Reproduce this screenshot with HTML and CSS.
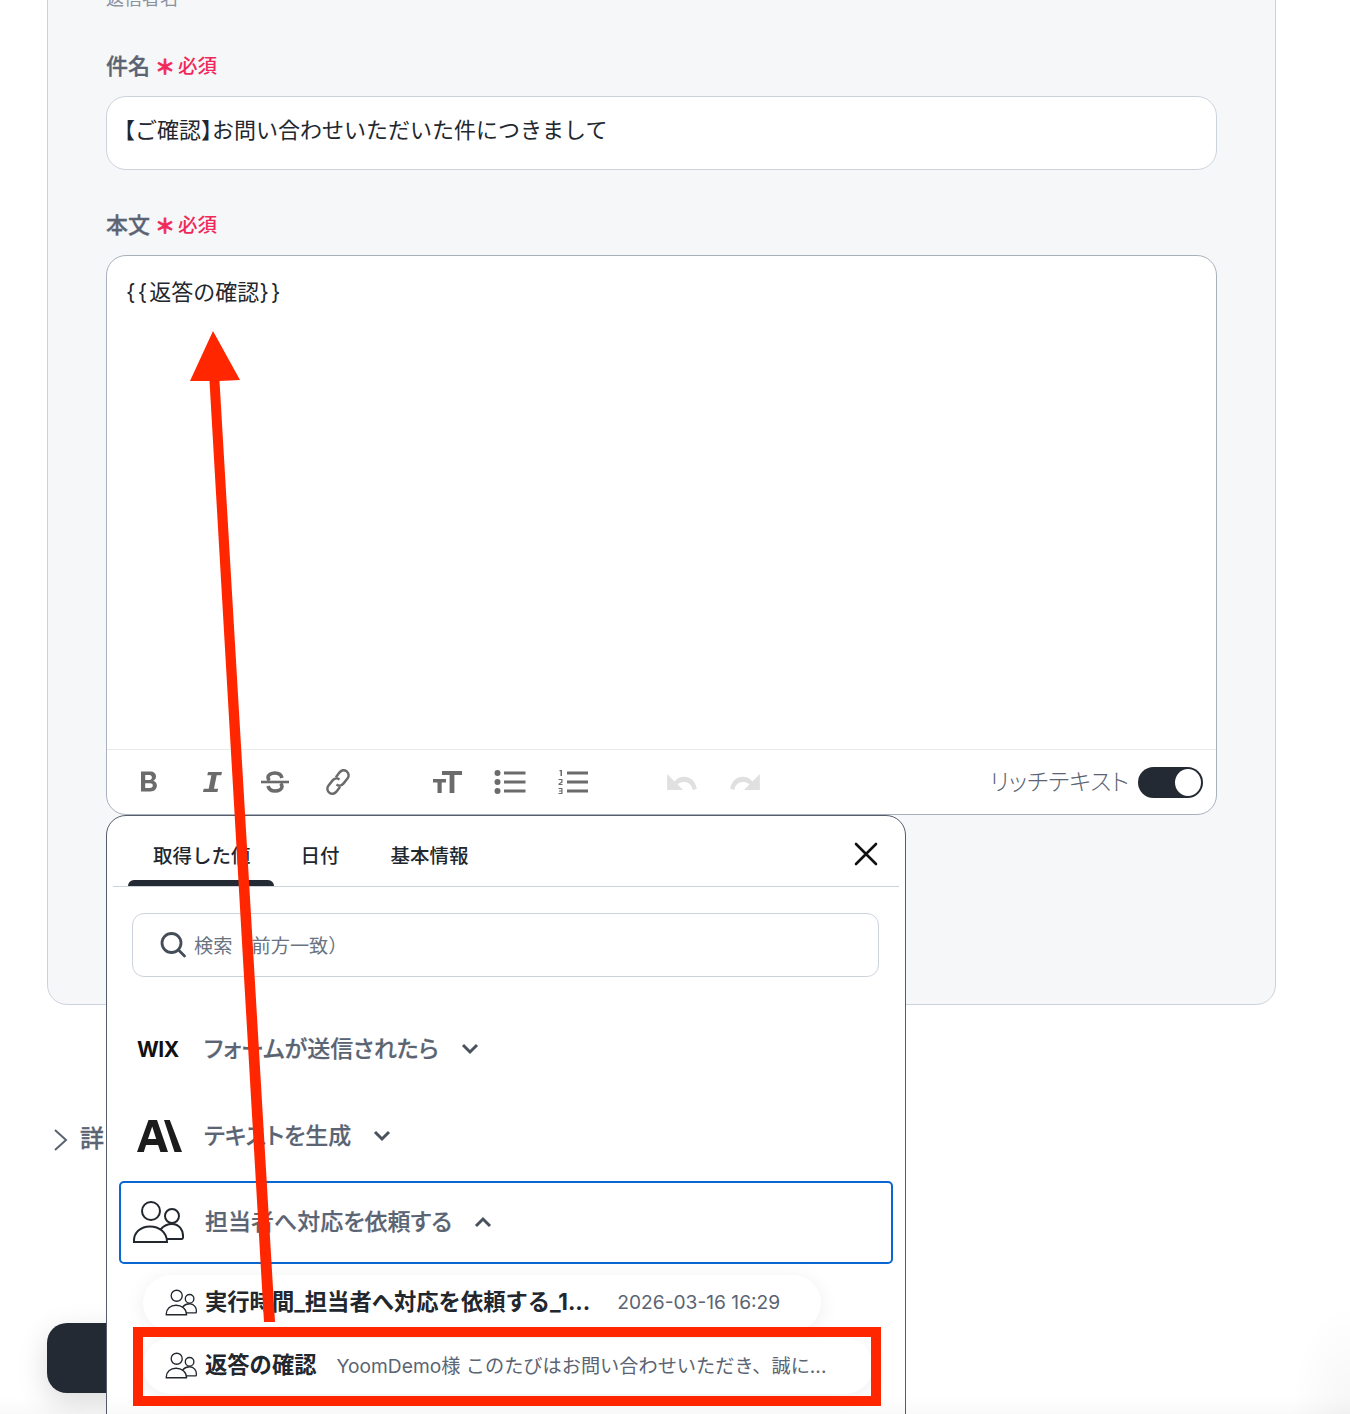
FILE: index.html
```html
<!DOCTYPE html>
<html lang="ja">
<head>
    <meta charset="UTF-8">
    <meta name="viewport" content="width=device-width, initial-scale=1.0">
    <title>Yoom - メール設定</title>
    <link rel="stylesheet" href="styles.css">
</head>
<body>
<div class="page">
    <!-- Form panel -->
    <div class="panel">
        <p class="hint">返信者名</p>

        <div class="field">
            <label class="field-label">件名 <span class="req-star">＊</span><span class="req-text">必須</span></label>
            <div class="text-input"><span class="bracket">【</span>ご確認<span class="bracket">】</span>お問い合わせいただいた件につきまして</div>
        </div>

        <div class="field">
            <label class="field-label">本文 <span class="req-star">＊</span><span class="req-text">必須</span></label>
            <div class="editor">
                <div class="editor-body"><span class="brace">{{</span>返答の確認<span class="brace">}}</span></div>
                <div class="toolbar">
                    <div class="tool-group">
                        <button class="tool"><svg width="24" height="24" viewBox="0 0 24 24"><path fill="#6b6b6b" d="M4 1.500h9.200c3.600 0 5.800 2 5.800 5 0 2-1 3.500-2.700 4.300 2.200.7 3.600 2.400 3.600 4.800 0 3.400-2.500 5.900-6.400 5.900H4zM8.200 5v4.900h4.200c1.600 0 2.500-1 2.500-2.500S14 5 12.400 5zm0 8.300V18h4.700c1.800 0 2.900-.9 2.900-2.400s-1.100-2.300-2.900-2.300z"/></svg></button>
                        <button class="tool"><svg width="24" height="24" viewBox="0 0 24 24"><path fill="#6b6b6b" d="M8 2h14l-.7 3.200h-4.600L14 18.800h4.200l-.8 3.200H3l.7-3.200h5L11.400 5.200H7.300z"/></svg></button>
                        <button class="tool"><svg width="28" height="24" viewBox="0 0 28 24"><path fill="none" stroke="#6b6b6b" stroke-width="3.600" d="M21 8c-.8-3.200-3.600-5-7-5-4 0-7 1.800-7 4.500 0 1.300.6 2.200 1.600 3M7 16c.8 3.200 3.600 5 7 5 4 0 7-1.800 7-4.500 0-1.300-.6-2.200-1.600-3"/><path stroke="#6b6b6b" stroke-width="2.600" d="M0 12h28"/></svg></button>
                        <button class="tool"><svg width="30" height="30" viewBox="0 0 28 28" fill="none" stroke="#6b6b6b" stroke-width="2.300"><path d="M12 9.500l3.500-4.500c1.800-2.200 4.500-2.500 6.500-1 2.200 1.700 2.500 4.600 1 6.500l-4 5c-1.700 2.100-4.500 2.300-6.400.9"/><path d="M16 18.500L12.500 23c-1.800 2.200-4.500 2.500-6.500 1-2.200-1.700-2.500-4.600-1-6.500l4-5c1.700-2.100 4.500-2.300 6.400-.9"/></svg></button>
                    </div>
                    <div class="tool-group">
                        <button class="tool tool-size"><svg width="30" height="24" viewBox="0 0 30 24"><path fill="#6b6b6b" d="M9 1h20v4h-7.600v18h-4.800V5H9zM0 9h13v3.600H8.700V23H4.500V12.600H0z"/></svg></button>
                        <button class="tool"><svg width="32" height="24" viewBox="0 0 32 24" fill="#6b6b6b"><circle cx="3.500" cy="3" r="3"/><circle cx="3.500" cy="12" r="3"/><circle cx="3.500" cy="21" r="3"/><path d="M10 1.500h21.500v3H10zM10 10.500h21.500v3H10zM10 19.500h21.500v3H10z"/></svg></button>
                        <button class="tool"><svg width="30" height="24" viewBox="0 0 30 24" fill="#6b6b6b"><path d="M9 1.500h21v3H9zM9 10.500h21v3H9zM9 19.500h21v3H9zM1.500 0H4v6H2.500V1.300h-1zM.5 9h4v3.500l-2.500 1.500h2.500v1H.5v-1.300l2.800-1.900V10h-2.800zM.5 18h4v6h-4v-1h2.800v-1.500H1v-1h2.300V19H.5z"/></svg></button>
                    </div>
                    <div class="tool-group">
                        <button class="tool"><svg width="30" height="16" viewBox="0 0 26 14"><path fill="#e0e0e0" d="M0 0v14h14l-5-5c2-1.500 4-2 6-2 3.500 0 6.500 2.500 7.500 7l3.500-1C24.500 6 20.500 2.500 15 2.500c-3.500 0-6 1-8.500 4z"/></svg></button>
                        <button class="tool"><svg width="30" height="16" viewBox="0 0 26 14"><path fill="#e0e0e0" d="M26 0v14H12l5-5c-2-1.500-4-2-6-2-3.500 0-6.500 2.500-7.500 7L0 13C1.500 6 5.500 2.500 11 2.500c3.500 0 6 1 8.500 4z"/></svg></button>
                    </div>
                    <div class="rich-switch">
                        <span class="rich-label">リッチテキスト</span>
                        <span class="toggle"><span class="toggle-knob"></span></span>
                    </div>
                </div>
            </div>
        </div>
    </div>

    <div class="details-row">
        <svg width="16" height="24" viewBox="0 0 16 24"><path fill="none" stroke="#5a6472" stroke-width="2" d="M2 2l11 10L2 22"/></svg>
        <span class="details-text">詳細設定</span>
    </div>

    <div class="save-btn"></div>

    <!-- Output picker, sits over the form -->
    <div class="picker">
        <div class="picker-tabs">
            <div class="picker-tab active">取得した値</div>
            <div class="picker-tab">日付</div>
            <div class="picker-tab">基本情報</div>
            <svg class="picker-close" width="24" height="24" viewBox="0 0 24 24"><path stroke="#111" stroke-width="2.600" stroke-linecap="round" d="M2 2l20 20M22 2L2 22"/></svg>
        </div>

        <div class="picker-search">
            <svg width="28" height="28" viewBox="0 0 28 28" fill="none" stroke="#454d59" stroke-width="2.800"><circle cx="12.500" cy="12" r="9.500"/><path stroke-linecap="round" d="M19.500 19l6 6"/></svg>
            <span>検索（前方一致）</span>
        </div>

        <div class="op-list">
            <div class="op-row">
                <span class="op-logo wix-logo">WIX</span>
                <span class="op-name">フォームが送信されたら</span>
                <svg class="op-chevron" width="18" height="12" viewBox="0 0 18 12"><path fill="none" stroke="#4a525e" stroke-width="3" d="M2 2l7 7 7-7"/></svg>
            </div>
            <div class="op-row">
                <span class="op-logo"><svg width="46" height="34" viewBox="0 0 46 34"><path fill="#1c1c1c" d="M12.500 1h8.500l11 32h-7.600l-2.300-7H10l-2.200 7H1zM12 20h8.200L16.200 7.500zM28 1h5.800L46 33h-7.500z"/></svg></span>
                <span class="op-name">テキストを生成</span>
                <svg class="op-chevron" width="18" height="12" viewBox="0 0 18 12"><path fill="none" stroke="#4a525e" stroke-width="3" d="M2 2l7 7 7-7"/></svg>
            </div>
            <div class="op-row selected">
                <span class="op-logo">
                    <svg width="52" height="44" viewBox="0 0 26 22" fill="none" stroke="#22272e" stroke-width="1"><circle cx="9.500" cy="5.500" r="4.500"/><circle cx="20" cy="8" r="3.500"/><path d="M1 21c-.3-5 3.500-7.800 8-7.800s8.500 2.800 8.500 7.800zM14.500 14.500c1.500-1.700 3.500-2.500 5.500-2.500 3.500 0 5.800 3 5.500 6.800-.1.500-.2.600-.6.700H17.400"/></svg>
                </span>
                <span class="op-name">担当者へ対応を依頼する</span>
                <svg class="op-chevron" width="18" height="12" viewBox="0 0 18 12"><path fill="none" stroke="#4a525e" stroke-width="3" d="M2 10l7-7 7 7"/></svg>
            </div>
        </div>

        <div class="value-list">
            <div class="value-pill first">
                <svg width="32" height="27" viewBox="0 0 26 22" fill="none" stroke="#22272e" stroke-width="1.100"><circle cx="9.500" cy="5.500" r="4.500"/><circle cx="20" cy="8" r="3.500"/><path d="M1 21c-.3-5 3.500-7.800 8-7.800s8.500 2.800 8.500 7.800zM14.500 14.500c1.500-1.700 3.500-2.500 5.500-2.500 3.500 0 5.800 3 5.500 6.800-.1.500-.2.600-.6.700H17.400"/></svg>
                <span class="value-name">実行時間_担当者へ対応を依頼する_1...</span>
                <span class="value-text">2026-03-16 16:29</span>
            </div>
            <div class="value-pill">
                <svg width="32" height="27" viewBox="0 0 26 22" fill="none" stroke="#22272e" stroke-width="1.100"><circle cx="9.500" cy="5.500" r="4.500"/><circle cx="20" cy="8" r="3.500"/><path d="M1 21c-.3-5 3.500-7.800 8-7.800s8.500 2.800 8.500 7.800zM14.500 14.500c1.500-1.700 3.500-2.500 5.500-2.500 3.500 0 5.800 3 5.500 6.800-.1.500-.2.600-.6.700H17.400"/></svg>
                <span class="value-name">返答の確認</span>
                <span class="value-text">YoomDemo様 このたびはお問い合わせいただき、誠に...</span>
            </div>
        </div>
    </div>

    <div class="edge-shade"></div>

    <!-- Annotations drawn on top of the screenshot -->
    <svg class="arrow" width="1350" height="1414" viewBox="0 0 1350 1414"><path fill="#ff2600" d="M264 1322L209.500 381H190L213 331l27 49-20.500 1L275 1322z"/></svg>
    <div class="mark-box"></div>
</div>
</body>
</html>
```

FILE: styles.css
```css
* {
    margin: 0;
    padding: 0;
    box-sizing: border-box;
    font-family: 'Inter', 'Noto Sans CJK JP', sans-serif;
}

body {
    background: white;
}

.page {
    position: relative;
    width: 1350px;
    height: 1414px;
    overflow: hidden;
}

.panel {
    width: 1229px;
    height: 1065px;
    margin: -60px 0 0 47px;
    padding: 46px 58px 0;
    background: #f6f7f9;
    border: 1px solid #cdd3dc;
    border-radius: 20px;
}

.hint {
    height: 24px;
    font-size: 18px;
    line-height: 24px;
    color: #8a929e;
    margin-bottom: 39px;
}

.field {
    margin-bottom: 39px;
}

.field-label {
    display: flex;
    align-items: center;
    height: 32px;
    padding-bottom: 4px;
    margin-bottom: 14px;
    font-size: 22px;
    font-weight: 500;
    -webkit-text-stroke: 0.3px #5a6472;
    color: #5a6472;
}

.req-star {
    margin-left: 5px;
    margin-right: 3px;
    padding-top: 4px;
    font-size: 20px;
    font-weight: 700;
    -webkit-text-stroke: 0.8px #f0295a;
    color: #f0295a;
}

.req-text {
    font-size: 19.5px;
    font-weight: 500;
    -webkit-text-stroke: 0;
    color: #f0295a;
}

.text-input {
    height: 74px;
    padding: 17px 17px;
    background: white;
    border: 1px solid #cdd3dc;
    border-radius: 20px;
    font-size: 22px;
    line-height: 32px;
    color: #22272e;
}

.bracket {
    font-feature-settings: "halt";
}

.editor {
    height: 560px;
    background: white;
    border: 1px solid #a9b1bd;
    border-radius: 20px;
    display: flex;
    flex-direction: column;
}

.editor-body {
    flex: 1;
    padding: 20px 19px;
    font-size: 22px;
    line-height: 32px;
    color: #22272e;
}

.brace {
    letter-spacing: 2.3px;
}

.toolbar {
    display: flex;
    align-items: center;
    height: 65px;
    padding: 0 13px 0 10.5px;
    border-top: 1px solid #e8eaed;
}

.tool-group {
    display: flex;
    margin-right: 46px;
}

.tool {
    display: flex;
    align-items: center;
    justify-content: center;
    width: 63px;
    height: 40px;
    border: none;
    background: none;
}

.tool-size {
    padding-left: 2px;
}

.rich-switch {
    display: flex;
    align-items: center;
    gap: 9px;
    margin-left: auto;
}

.rich-label {
    padding-bottom: 5px;
    font-size: 23.2px;
    font-weight: 300;
    font-feature-settings: "palt";
    color: #5a6472;
}

.toggle {
    display: flex;
    justify-content: flex-end;
    align-items: center;
    width: 65px;
    height: 31px;
    padding-right: 2px;
    background: #242a33;
    border-radius: 16px;
}

.toggle-knob {
    width: 26px;
    height: 27px;
    background: white;
    border-radius: 50%;
}

.details-row {
    display: flex;
    align-items: center;
    gap: 11px;
    height: 40px;
    margin: 115px 0 0 53px;
}

.details-text {
    padding-bottom: 8px;
    font-size: 24px;
    font-weight: 500;
    -webkit-text-stroke: 0.3px #5a6472;
    letter-spacing: 4px;
    color: #5a6472;
}

.save-btn {
    width: 300px;
    height: 70px;
    margin: 163px 0 0 47px;
    background: #242a33;
    border-radius: 20px;
    box-shadow: 0 10px 30px rgba(0, 0, 0, 0.15);
}

.picker {
    position: absolute;
    left: 106px;
    top: 815px;
    width: 800px;
    height: 640px;
    padding: 0 6px;
    background: white;
    border: 1px solid #555d6a;
    border-radius: 20px 20px 0 0;
}

.picker-tabs {
    position: relative;
    display: flex;
    gap: 2px;
    height: 71px;
    padding-left: 15px;
    border-bottom: 1px solid #cdd3dc;
}

.picker-tab {
    position: relative;
    padding: 27px 24px 0 25px;
    font-size: 19.5px;
    font-weight: 500;
    line-height: 26px;
    color: #22272e;
}

.picker-tab.active {
    padding-right: 23px;
}

.picker-tab.active::after {
    content: "";
    position: absolute;
    left: 0;
    right: 0;
    bottom: 0;
    height: 6px;
    background: #242a33;
    border-radius: 6px 6px 0 0;
}

.picker-close {
    position: absolute;
    right: 21px;
    top: 26px;
}

.picker-search {
    display: flex;
    align-items: center;
    gap: 7px;
    height: 64px;
    margin: 26px 20px 0 19px;
    padding-left: 26px;
    border: 1px solid #cdd3dc;
    border-radius: 12px;
    font-size: 19.2px;
    color: #6a7380;
}

.op-list {
    display: flex;
    flex-direction: column;
    gap: 4px;
    margin: 31px 0 0 6px;
    width: 774px;
}

.op-row {
    display: flex;
    align-items: center;
    height: 82.5px;
    padding-left: 12px;
}

.op-row.selected {
    border: 2.5px solid #0a66d0;
    border-radius: 5px;
}

.op-logo {
    display: flex;
    align-items: center;
    width: 73px;
    padding-left: 5px;
}

.op-row.selected .op-logo {
    width: 72px;
    padding-left: 0;
    margin-left: -1px;
    margin-right: 1px;
}

.wix-logo {
    padding-left: 6px;
    font-size: 21px;
    font-weight: 700;
    color: #111;
    letter-spacing: -0.5px;
}

.op-name {
    padding-bottom: 4px;
    font-size: 23px;
    font-weight: 500;
    -webkit-text-stroke: 0.2px #5a6472;
    font-feature-settings: "palt";
    color: #5a6472;
}

.op-chevron {
    margin-left: 22px;
}

.value-list {
    display: flex;
    flex-direction: column;
    gap: 7px;
    margin: 11px 0 0 30px;
}

.value-pill {
    display: flex;
    align-items: center;
    width: 730px;
    height: 56px;
    padding-left: 22px;
    background: white;
    border-radius: 28px;
    box-shadow: 0 3px 20px rgba(0, 0, 0, 0.07);
}

.value-pill.first {
    width: 678px;
}

.value-name {
    margin-left: 8px;
    padding-bottom: 6px;
    font-size: 22.3px;
    font-weight: 700;
    color: #22272e;
}

.value-text {
    margin-left: 20px;
    padding-bottom: 2px;
    font-size: 19.2px;
    color: #5a6472;
}

.value-pill.first .value-text {
    margin-left: 27px;
}

.edge-shade {
    position: absolute;
    inset: 0;
    pointer-events: none;
    background:
        radial-gradient(60px 110px at 100% 100%, rgba(0, 0, 0, 0.035), transparent),
        linear-gradient(to top, rgba(0, 0, 0, 0.025), transparent 18px);
}

.arrow {
    position: absolute;
    left: 0;
    top: 0;
    pointer-events: none;
}

.mark-box {
    position: absolute;
    left: 133px;
    top: 1327px;
    width: 748px;
    height: 79px;
    border: 10px solid #ff2600;
}
```
